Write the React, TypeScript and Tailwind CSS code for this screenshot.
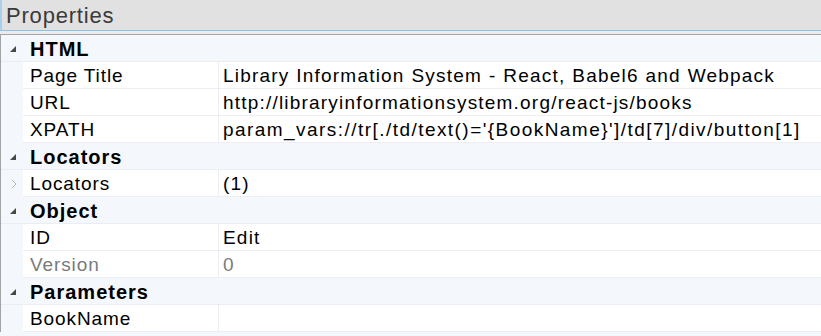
import React from "react";

const font = { fontFamily: '"Liberation Sans", Arial, sans-serif' };

function Tri() {
  return (
    <svg width="6" height="6" viewBox="0 0 6 6" className="block">
      <polygon points="6,0 6,6 0,6" fill="#484848" />
    </svg>
  );
}

function Chevron() {
  return (
    <svg width="6" height="10" viewBox="0 0 6 10" className="block">
      <path d="M1 1 L5 5 L1 9" fill="none" stroke="#b8b8b8" strokeWidth="1" />
    </svg>
  );
}

function Category({ label }: { label: string }) {
  return (
    <div className="flex h-[27px] items-center border-b border-[#eaedf3]">
      <div className="flex w-[22px] justify-end pr-[7px] pt-[1px]">
        <Tri />
      </div>
      <div className="pl-[7px] pt-[2px] text-[20px] font-bold tracking-[1px] text-black">{label}</div>
    </div>
  );
}

function Prop({
  name,
  value,
  disabled,
  expandable,
  wide,
}: {
  name: string;
  value: string;
  disabled?: boolean;
  expandable?: boolean;
  wide?: boolean;
}) {
  const color = disabled ? "text-[#7a7a7a]" : "text-black";
  return (
    <div className="flex h-[27px]">
      <div className="flex w-[22px] shrink-0 items-center justify-center pl-[4px]">
        {expandable ? <Chevron /> : null}
      </div>
      <div
        className={`flex w-[196px] shrink-0 items-center border-b border-r border-[#eceef4] bg-white pl-[7px] pt-[2px] text-[19px] tracking-[0.9px] ${color}`}
      >
        {name}
      </div>
      <div
        className={`flex flex-1 items-center whitespace-nowrap border-b border-[#eceef4] bg-white pl-[4px] pt-[2px] text-[19px] ${
          wide ? "tracking-[1.45px]" : "tracking-[1.2px]"
        } [word-spacing:0.4px] ${color}`}
      >
        {value}
      </div>
    </div>
  );
}

export default function App() {
  return (
    <div className="h-[336px] w-[821px] overflow-hidden bg-[#f4f7fc]" style={font}>
      <div className="flex h-[30px] items-center border-l-2 border-[#a8d0ee] bg-[#e1e1e1] pl-[4px] pt-[1px] text-[22px] tracking-[0.8px] text-[#3a3a3a]">
        Properties
      </div>
      <div className="h-px bg-[#8cc3ea]" />
      <div className="h-[3px] bg-[#ebebeb]" />
      <div className="h-px bg-[#a3a3a3]" />
      <div className="border-l border-[#a3a3a3]">
        <Category label="HTML" />
        <Prop name="Page Title" value="Library Information System - React, Babel6 and Webpack" />
        <Prop name="URL" value="http://libraryinformationsystem.org/react-js/books" />
        <Prop name="XPATH" value="param_vars://tr[./td/text()='{BookName}']/td[7]/div/button[1]" wide />
        <Category label="Locators" />
        <Prop name="Locators" value="(1)" expandable />
        <Category label="Object" />
        <Prop name="ID" value="Edit" />
        <Prop name="Version" value="0" disabled />
        <Category label="Parameters" />
        <Prop name="BookName" value="" />
      </div>
    </div>
  );
}
